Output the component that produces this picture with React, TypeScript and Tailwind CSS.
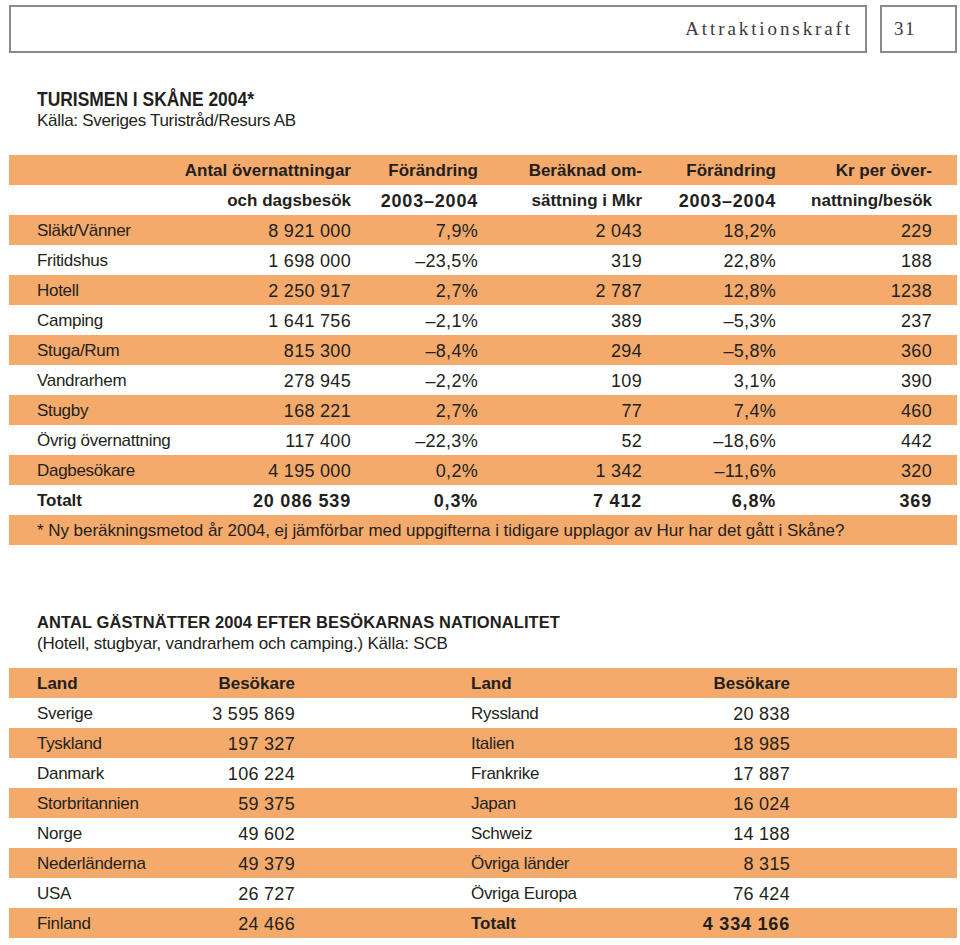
const orange = 'bg-[#f4aa6b]';

const rows1: [string, string, string, string, string, string][] = [
  ['Släkt/Vänner', '8 921 000', '7,9%', '2 043', '18,2%', '229'],
  ['Fritidshus', '1 698 000', '–23,5%', '319', '22,8%', '188'],
  ['Hotell', '2 250 917', '2,7%', '2 787', '12,8%', '1238'],
  ['Camping', '1 641 756', '–2,1%', '389', '–5,3%', '237'],
  ['Stuga/Rum', '815 300', '–8,4%', '294', '–5,8%', '360'],
  ['Vandrarhem', '278 945', '–2,2%', '109', '3,1%', '390'],
  ['Stugby', '168 221', '2,7%', '77', '7,4%', '460'],
  ['Övrig övernattning', '117 400', '–22,3%', '52', '–18,6%', '442'],
  ['Dagbesökare', '4 195 000', '0,2%', '1 342', '–11,6%', '320'],
];

const rows2: [string, string, string, string][] = [
  ['Sverige', '3 595 869', 'Ryssland', '20 838'],
  ['Tyskland', '197 327', 'Italien', '18 985'],
  ['Danmark', '106 224', 'Frankrike', '17 887'],
  ['Storbritannien', '59 375', 'Japan', '16 024'],
  ['Norge', '49 602', 'Schweiz', '14 188'],
  ['Nederländerna', '49 379', 'Övriga länder', '8 315'],
  ['USA', '26 727', 'Övriga Europa', '76 424'],
];

// digits in the print face run wider than Arial's, so numbers get a bigger size
const isNum = (s: string) => /^[–0-9 ,%]+$/.test(s);

function Txt({ s, bold }: { s: string; bold?: boolean }) {
  if (isNum(s)) {
    return (
      <span className={`text-[18px] leading-[22px] ${bold ? 'font-bold tracking-[0.8px]' : 'tracking-[0.3px]'}`}>{s}</span>
    );
  }
  return <span className={`leading-[22px] ${bold ? 'font-bold' : 'tracking-[-0.3px]'}`}>{s}</span>;
}

function Row1({ cells, shaded, bold }: { cells: string[]; shaded?: boolean; bold?: boolean }) {
  return (
    <div
      className={`grid grid-cols-[164px_150px_127px_164px_134px_156px] h-[30px] items-center pt-[2px] pl-[28px] pr-[25px] ${
        shaded ? orange : ''
      }`}
    >
      {cells.map((c, i) => (
        <div key={i} className={`flex whitespace-nowrap ${i === 0 ? 'justify-start' : 'justify-end'}`}>
          <Txt s={c} bold={bold} />
        </div>
      ))}
    </div>
  );
}

function Row2({ cells, shaded, bold }: { cells: string[]; shaded?: boolean; bold?: boolean }) {
  const b2 = bold || cells[2] === 'Totalt';
  return (
    <div className={`flex h-[30px] items-center pt-[2px] pl-[28px] whitespace-nowrap ${shaded ? orange : ''}`}>
      <span className="w-[163px]">
        <Txt s={cells[0]} bold={bold} />
      </span>
      <span className="w-[95px] flex justify-end">
        <Txt s={cells[1]} bold={bold} />
      </span>
      <span className="ml-[176px] w-[180px]">
        <Txt s={cells[2]} bold={b2} />
      </span>
      <span className="w-[139px] flex justify-end">
        <Txt s={cells[3]} bold={b2} />
      </span>
    </div>
  );
}

export default function App() {
  return (
    <div className="w-[960px] h-[945px] bg-white text-[#231f20] text-[17px] font-['Liberation_Sans',Arial,sans-serif] overflow-hidden">
      <div className="flex pt-[5px] pl-[9px]">
        <div className="w-[858px] h-[48px] border-2 border-[#8a8a8a] flex items-center justify-end pr-[12px] font-['Liberation_Serif',serif] text-[19px] tracking-[2.9px] text-[#3a3a3a]">
          Attraktionskraft
        </div>
        <div className="ml-[13px] w-[77px] h-[48px] border-2 border-[#8a8a8a] flex items-center pl-[12px] font-['Liberation_Serif',serif] text-[19px] tracking-[1.5px] text-[#3a3a3a]">
          31
        </div>
      </div>

      <div className="pl-[37px] mt-[35px]">
        <div className="h-[22px] flex items-center whitespace-nowrap">
          <span className="inline-block origin-left scale-x-[0.83] text-[21px] leading-[22px] font-bold">
            TURISMEN I SKÅNE 2004*
          </span>
        </div>
        <div className="h-[22px] leading-[22px] tracking-[-0.3px]">Källa: Sveriges Turistråd/Resurs AB</div>
      </div>

      <div className="ml-[9px] mr-[3px] mt-[23px]">
        <Row1 shaded bold cells={['', 'Antal övernattningar', 'Förändring', 'Beräknad om-', 'Förändring', 'Kr per över-']} />
        <Row1 bold cells={['', 'och dagsbesök', '2003–2004', 'sättning i Mkr', '2003–2004', 'nattning/besök']} />
        {rows1.map((r, i) => (
          <Row1 key={r[0]} cells={r} shaded={i % 2 === 0} />
        ))}
        <Row1 bold cells={['Totalt', '20 086 539', '0,3%', '7 412', '6,8%', '369']} />
        <div className={`h-[30px] flex items-center pt-[2px] pl-[28px] ${orange} whitespace-nowrap tracking-[-0.05px]`}>
          * Ny beräkningsmetod år 2004, ej jämförbar med uppgifterna i tidigare upplagor av Hur har det gått i Skåne?
        </div>
      </div>

      <div className="pl-[37px] mt-[66px]">
        <div className="h-[22px] text-[16.5px] leading-[22px] font-bold tracking-[0.1px]">
          ANTAL GÄSTNÄTTER 2004 EFTER BESÖKARNAS NATIONALITET
        </div>
        <div className="h-[22px] leading-[22px] tracking-[-0.2px]">(Hotell, stugbyar, vandrarhem och camping.) Källa: SCB</div>
      </div>

      <div className="ml-[9px] mr-[3px] mt-[13px]">
        <Row2 shaded bold cells={['Land', 'Besökare', 'Land', 'Besökare']} />
        {rows2.map((r, i) => (
          <Row2 key={r[0]} cells={r} shaded={i % 2 === 1} />
        ))}
        <Row2 shaded cells={['Finland', '24 466', 'Totalt', '4 334 166']} />
      </div>
    </div>
  );
}
